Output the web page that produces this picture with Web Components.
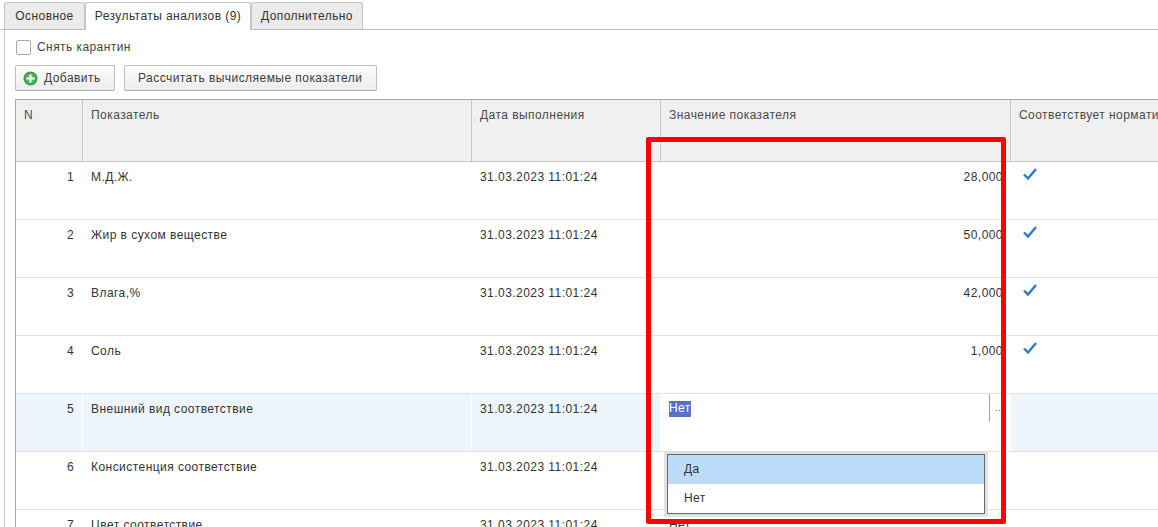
<!DOCTYPE html>
<html lang="ru">
<head>
<meta charset="utf-8">
<title>Результаты анализов</title>
<style>
  html, body { margin: 0; height: 100%; background: #fff; overflow: hidden; }
  body { font: 12px "Liberation Sans", Arial, sans-serif; color: #3a3a3a; }
</style>
</head>
<body>
<lab-form></lab-form>

<script>
// tab strip
class TabStrip extends HTMLElement {
  constructor() {
    super();
    this.attachShadow({ mode: 'open' });
  }
  connectedCallback() {
    this.shadowRoot.innerHTML = `
      <style>
        :host { display: flex; height: 30px; box-sizing: border-box; padding: 2px 0 0 4px; position: relative; }
        :host::after { content: ''; position: absolute; left: 0; right: 0; bottom: 0; height: 1px; background: #bcbcbc; }
        .tab {
          box-sizing: border-box; height: 27px; padding: 6px 0 0; text-align: center;
          background: #ebebeb; border: 1px solid #c4c4c4; border-bottom: 0;
          border-radius: 3px 3px 0 0; color: #333; letter-spacing: .43px;
        }
        .on { background: #fff; position: relative; z-index: 1; height: 28px; }
      </style>
      <div class="tab" style="width:81px">Основное</div>
      <div class="tab on" style="width:166px">Результаты анализов (9)</div>
      <div class="tab" style="width:112px">Дополнительно</div>
    `;
  }
}
customElements.define('tab-strip', TabStrip);

class CheckField extends HTMLElement {
  constructor() {
    super();
    this.attachShadow({ mode: 'open' });
  }
  connectedCallback() {
    this.shadowRoot.innerHTML = `
      <style>
        :host { display: flex; align-items: center; gap: 6px; height: 16px; margin-left: 1px; color: #444; letter-spacing: .43px; }
        .box { width: 13px; height: 13px; border: 1px solid #a8a8a8; border-radius: 2px; background: #fff; }
      </style>
      <span class="box"></span><slot></slot>
    `;
  }
}
customElements.define('check-field', CheckField);

class FormButton extends HTMLElement {
  constructor() {
    super();
    this.attachShadow({ mode: 'open' });
  }
  connectedCallback() {
    this.shadowRoot.innerHTML = `
      <style>
        :host {
          display: inline-flex; align-items: center; gap: 6px; padding-left: var(--pad, 7px);
          box-sizing: border-box; height: 26px; border: 1px solid #c0c0c0; border-bottom-color: #a9a9a9;
          border-radius: 2px; background: linear-gradient(#fdfdfd, #ececec); color: #3d3d3d; letter-spacing: .45px;
        }
      </style>
      <slot name="icon"></slot><slot></slot>
    `;
  }
}
customElements.define('form-button', FormButton);

// one row of the grid, columns are shared through --cols
class ResultRow extends HTMLElement {
  constructor() {
    super();
    this.attachShadow({ mode: 'open' });
  }
  connectedCallback() {
    const n = this.getAttribute('n');
    const mark = this.hasAttribute('ok') ? `
      <svg width="16" height="14" viewBox="0 0 16 14"><path d="M2 7.5 L6 11.5 L14 2" fill="none" stroke="#2f78c4" stroke-width="2.4"/></svg>` : '';
    this.shadowRoot.innerHTML = `
      <style>
        :host {
          display: grid; grid-template-columns: var(--cols); height: 58px; box-sizing: border-box;
          border-bottom: 1px solid #e2e2e2; color: #333; letter-spacing: .45px;
        }
        :host([current]) { background: #eef5fd; }
        .c { padding: 8px 8px 0 8px; box-sizing: border-box; border-right: 1px solid transparent; white-space: nowrap; overflow: hidden; }
        :host([current]) .c { border-right-color: #fff; }
        .num { text-align: right; }
        .val { text-align: right; padding-right: 7px; }
        .mark { padding: 5px 0 0 11px; }
        :host([current]) .val { background: #fff; padding: 0; }
        :host([left]) .val { text-align: left; }
      </style>
      <div class="c num">${n}</div>
      <div class="c">${this.getAttribute('name')}</div>
      <div class="c">31.03.2023 11:01:24</div>
      <div class="c val"><slot>${this.getAttribute('value') || ''}</slot></div>
      <div class="c mark">${mark}</div>
    `;
  }
}
customElements.define('result-row', ResultRow);

// the opened editor inside the value cell
class ValueEditor extends HTMLElement {
  constructor() {
    super();
    this.attachShadow({ mode: 'open' });
  }
  connectedCallback() {
    this.shadowRoot.innerHTML = `
      <style>
        :host { display: flex; height: 28px; text-align: left; letter-spacing: .45px; color: #333; }
        .text { flex: 1; padding: 7px 0 0 8px; }
        .sel { display: inline-block; height: 16px; line-height: 15px; background: #5a70c8; color: #fff; }
        .btn { width: 21px; border-left: 1px solid #a0a0a0; padding: 7px 0 0 5px; font-size: 9px; line-height: 15px; color: #444; letter-spacing: .5px; box-sizing: border-box; }
      </style>
      <div class="text"><span class="sel">Нет</span></div>
      <div class="btn">..</div>
    `;
  }
}
customElements.define('value-editor', ValueEditor);

class ChoiceList extends HTMLElement {
  constructor() {
    super();
    this.attachShadow({ mode: 'open' });
  }
  connectedCallback() {
    this.shadowRoot.innerHTML = `
      <style>
        :host {
          position: absolute; left: 667px; top: 454px; width: 318px; box-sizing: border-box;
          border: 1px solid #666; background: #fff; box-shadow: 0 0 0 3px #e2e2e2;
          color: #333; letter-spacing: .45px; z-index: 3;
        }
        div { height: 29px; line-height: 29px; padding-left: 16px; }
        .hover { background: #bbddf9; }
      </style>
      <div class="hover">Да</div>
      <div>Нет</div>
    `;
  }
}
customElements.define('choice-list', ChoiceList);

class ResultsTable extends HTMLElement {
  constructor() {
    super();
    this.attachShadow({ mode: 'open' });
  }
  connectedCallback() {
    this.shadowRoot.innerHTML = `
      <style>
        :host {
          display: block; --cols: 67px 389px 189px 350px 200px; width: 1195px;
          border-top: 1px solid #aaa; border-left: 1px solid #aaa; box-sizing: border-box;
        }
        .head {
          display: grid; grid-template-columns: var(--cols); height: 62px; box-sizing: border-box;
          background: #f0f0f0; border-bottom: 1px solid #c8c8c8; color: #4a4a4a; letter-spacing: .45px;
        }
        .head div { padding: 8px 8px 0; border-right: 1px solid #c8c8c8; white-space: nowrap; overflow: hidden; box-sizing: border-box; }
        .head div:last-child { border-right: 0; }
      </style>
      <div class="head">
        <div>N</div><div>Показатель</div><div>Дата выполнения</div><div>Значение показателя</div><div>Соответствует нормативу</div>
      </div>
      <slot></slot>
    `;
  }
}
customElements.define('results-table', ResultsTable);

class LabForm extends HTMLElement {
  constructor() {
    super();
    this.attachShadow({ mode: 'open' });
  }
  connectedCallback() {
    this.shadowRoot.innerHTML = `
      <style>
        :host { display: block; position: relative; width: 1158px; height: 527px; overflow: hidden; }
        .body { margin-left: 4px; border-left: 1px solid #c4c4c4; padding: 9px 0 0 10px; height: 497px; box-sizing: border-box; }
        .bar { display: flex; gap: 9px; margin: 10px 0 8px; }
        /* annotation drawn over the shot */
        .frame {
          position: absolute; left: 646px; top: 137px; width: 360px; height: 387px; box-sizing: border-box;
          border: 5px solid #fe0000; border-radius: 2px; z-index: 4; pointer-events: none;
        }
      </style>
      <tab-strip></tab-strip>
      <div class="body">
        <check-field>Снять карантин</check-field>
        <div class="bar">
          <form-button style="width:100px">
            <svg slot="icon" width="15" height="15" viewBox="0 0 15 15">
              <circle cx="7.5" cy="7.5" r="7" fill="#3a9b45"/>
              <circle cx="7.5" cy="7.5" r="5.4" fill="#4fb558"/>
              <path d="M7.5 3.5v8M3.5 7.5h8" stroke="#fff" stroke-width="2.2"/>
            </svg>
            Добавить
          </form-button>
          <form-button style="width:253px;--pad:13px">Рассчитать вычисляемые показатели</form-button>
        </div>
        <results-table>
          <result-row n="1" name="М.Д.Ж." value="28,000" ok></result-row>
          <result-row n="2" name="Жир в сухом веществе" value="50,000" ok></result-row>
          <result-row n="3" name="Влага,%" value="42,000" ok></result-row>
          <result-row n="4" name="Соль" value="1,000" ok></result-row>
          <result-row n="5" name="Внешний вид соответствие" current><value-editor></value-editor></result-row>
          <result-row n="6" name="Консистенция соответствие"></result-row>
          <result-row n="7" name="Цвет соответствие" value="Нет" left></result-row>
        </results-table>
      </div>
      <choice-list></choice-list>
      <div class="frame"></div>
    `;
  }
}
customElements.define('lab-form', LabForm);
</script>
</body>
</html>
